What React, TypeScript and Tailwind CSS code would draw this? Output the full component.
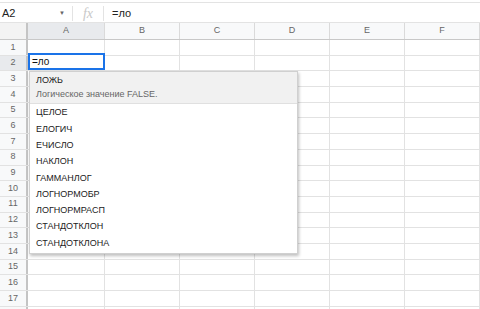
import React from "react";

const COLUMNS = ["A", "B", "C", "D", "E", "F"];
const ROW_COUNT = 18;

const SUGGESTIONS = [
  "ЦЕЛОЕ",
  "ЕЛОГИЧ",
  "ЕЧИСЛО",
  "НАКЛОН",
  "ГАММАНЛОГ",
  "ЛОГНОРМОБР",
  "ЛОГНОРМРАСП",
  "СТАНДОТКЛОН",
  "СТАНДОТКЛОНА",
];

const font = { fontFamily: '"Liberation Sans", Arial, sans-serif' };

function FormulaBar() {
  return (
    <div className="flex h-[21px] items-center border-t border-b border-[#e3e3e3] bg-white pt-px text-[11px] text-[#222]">
      <div className="flex w-[72px] items-center justify-between pl-[2px] pr-[7px]">
        <span>A2</span>
        <span className="text-[6px] text-[#666]">▼</span>
      </div>
      <div className="flex h-[15px] w-[32px] items-center justify-center border-x border-[#e3e3e3]">
        <span className="text-[14px] italic text-[#c8c8c8]" style={{ fontFamily: '"Liberation Serif", serif' }}>
          fx
        </span>
      </div>
      <span className="pl-[8px]">=ло</span>
    </div>
  );
}

function HeaderRow() {
  return (
    <div className="grid h-[17px] grid-cols-[28px_77px_75px_75px_75px_75px_1fr] border-b border-[#c8c8c8] bg-[#f8f9fa] text-[9px] text-[#666]">
      <div className="border-r-[2px] border-[#c4c4c4] bg-[#f3f3f3]" />
      {COLUMNS.map((c) => (
        <div
          key={c}
          className={`flex items-center justify-center border-r border-[#dadada] ${c === "A" ? "bg-[#e8eaed]" : ""}`}
        >
          {c}
        </div>
      ))}
    </div>
  );
}

function Row({ n }: { n: number }) {
  // the last row only peeks in at the bottom edge, its number is off screen
  const label = n < ROW_COUNT ? n : "";
  return (
    <div className="grid h-[15.7px] grid-cols-[28px_77px_75px_75px_75px_75px_1fr] border-b border-[#e2e2e2] text-[9px]">
      <div
        className={`flex items-center justify-center border-r-[2px] border-[#c4c4c4] text-[#666] ${n === 2 ? "bg-[#e8eaed]" : "bg-[#f8f9fa]"}`}
      >
        {label}
      </div>
      {COLUMNS.map((c) => (
        <div key={c} className="border-r border-[#e2e2e2] bg-white" />
      ))}
    </div>
  );
}

function Suggestions() {
  return (
    <div className="absolute left-[29px] top-[71px] w-[269px] border border-[#d0d0d0] bg-white text-[9px] text-[#222] shadow-[1px_2px_3px_rgba(0,0,0,0.25)]">
      <div className="flex h-[32px] flex-col justify-center gap-[3px] border-b border-[#e0e0e0] bg-[#f1f1f1] pl-[6px]">
        <span className="leading-[11px]">ЛОЖЬ</span>
        <span className="leading-[11px] text-[#666]">Логическое значение FALSE.</span>
      </div>
      <div className="flex flex-col py-[1px]">
        {SUGGESTIONS.map((s) => (
          <div key={s} className="flex h-[16.3px] items-center pl-[6px]">
            {s}
          </div>
        ))}
      </div>
    </div>
  );
}

export default function App() {
  return (
    <div className="relative h-[309px] w-[480px] overflow-hidden bg-white pt-[2px]" style={font}>
      <FormulaBar />
      <HeaderRow />
      {Array.from({ length: ROW_COUNT }, (_, i) => (
        <Row key={i} n={i + 1} />
      ))}
      <div className="absolute left-[28px] top-[53px] flex h-[17px] w-[77px] items-center border-2 border-[#1a73e8] bg-white pl-[2px] text-[10px] text-[#111]">
        =ло
      </div>
      <Suggestions />
    </div>
  );
}
